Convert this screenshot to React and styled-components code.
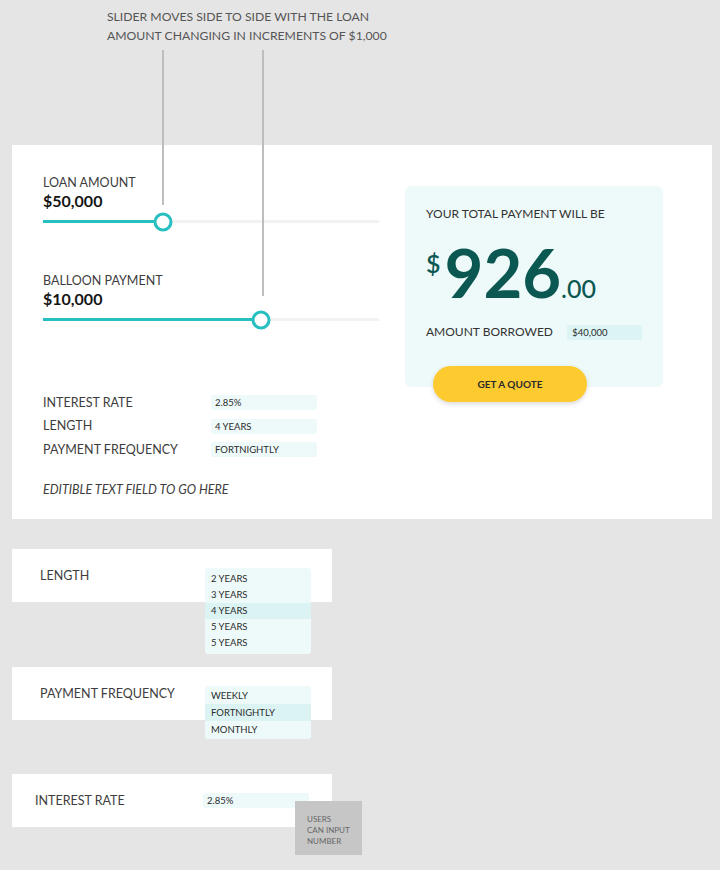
import React from 'react';
import styled, { createGlobalStyle } from 'styled-components';

const GlobalStyle = createGlobalStyle`
  body {
    margin: 0;
    background: #e5e5e5;
    font-family: Lato, "Open Sans", sans-serif;
  }
`;

const teal = '#27bfc0';
const dark = '#0b5752';
const fieldBg = '#eefafa';

const Page = styled.div`
  position: relative;
  width: 720px;
  height: 870px;
  overflow: hidden;
`;

const Annotation = styled.div`
  height: 145px;
  box-sizing: border-box;
  padding: 7px 0 0 107px;
  font-size: 12.2px;
  line-height: 19px;
  color: #555;
`;

const CalloutLine = styled.div`
  position: absolute;
  top: 50px;
  left: ${({ $x }) => $x}px;
  width: 2px;
  height: ${({ $h }) => $h}px;
  background: #bdbdbd;
  z-index: 2;
`;

const MainCard = styled.section`
  margin-left: 12px;
  width: 700px;
  height: 374px;
  box-sizing: border-box;
  background: #fff;
  padding-left: 31px;
  display: grid;
  grid-template-columns: 336px 258px;
  column-gap: 26px;
  align-items: start;
`;

const Controls = styled.div`
  padding-top: 30px;
`;

const Label = styled.div`
  font-size: 12.5px;
  line-height: 16px;
  color: #3d3d3d;
  margin-top: ${({ $mt }) => $mt || 0}px;
`;

const Value = styled.div`
  font-size: 16px;
  line-height: 20px;
  font-weight: 700;
  color: #151515;
`;

const SliderWrap = styled.div`
  position: relative;
  height: 20px;
`;

const Track = styled.div`
  position: absolute;
  left: 0;
  right: 0;
  top: 9px;
  height: 3px;
  background: #f2f2f2;
`;

const Fill = styled.div`
  position: absolute;
  left: 0;
  top: 0;
  bottom: 0;
  background: ${teal};
`;

const Knob = styled.div`
  position: absolute;
  top: 50%;
  width: 19px;
  height: 19px;
  box-sizing: border-box;
  border: 3px solid ${teal};
  border-radius: 50%;
  background: #fff;
  transform: translate(-50%, -50%);
`;

const Slider = ({ pos }) => (
  <SliderWrap>
    <Track>
      <Fill style={{ width: pos }} />
      <Knob style={{ left: pos }} />
    </Track>
  </SliderWrap>
);

const Rows = styled.div`
  margin-top: 62px;
`;

const Row = styled.div`
  display: flex;
  align-items: center;
  height: 23.5px;
`;

const RowLabel = styled(Label)`
  width: ${({ $w }) => $w || 168}px;
  flex-shrink: 0;
`;

const Field = styled.div`
  width: ${({ $w }) => $w || 106}px;
  height: 15px;
  box-sizing: border-box;
  padding-left: ${({ $pl }) => $pl || 4}px;
  background: ${({ $bg }) => $bg || fieldBg};
  border-radius: 2px;
  font-size: 9.5px;
  line-height: 15px;
  color: #2b2b2b;
`;

const Note = styled.div`
  margin-top: 20px;
  font-size: 12.5px;
  line-height: 16px;
  font-style: italic;
  color: #3d3d3d;
`;

const ResultPanel = styled.div`
  position: relative;
  margin-top: 41px;
  height: 201px;
  box-sizing: border-box;
  padding: 20px 21px 0;
  background: ${fieldBg};
  border-radius: 6px;
`;

const PanelTitle = styled.div`
  font-size: 12px;
  line-height: 16px;
  color: #333;
`;

const Amount = styled.div`
  display: flex;
  align-items: baseline;
  margin-top: 17px;
  color: ${dark};
`;

const Dollar = styled.span`
  align-self: flex-start;
  margin-top: 12px;
  margin-right: 4px;
  font-size: 25px;
  line-height: 1;
  font-weight: 600;
`;

const Digits = styled.span`
  font-size: 67px;
  line-height: 66px;
  font-weight: 700;
`;

const Cents = styled.span`
  font-size: 25px;
  font-weight: 500;
`;

const Borrowed = styled.div`
  display: flex;
  align-items: center;
  margin-top: 19px;
`;

const BorrowedLabel = styled.div`
  width: 142px;
  font-size: 12px;
  line-height: 16px;
  color: #333;
`;

const QuoteButton = styled.button`
  position: absolute;
  left: 28px;
  top: 180px;
  width: 154px;
  height: 36px;
  border: 0;
  border-radius: 18px;
  background: #fdca30;
  box-shadow: 0 2px 5px rgba(0, 0, 0, 0.15);
  font-family: inherit;
  font-size: 10px;
  font-weight: 700;
  color: #2a2a2a;
`;

const MiniCard = styled.div`
  position: relative;
  display: flex;
  align-items: flex-start;
  margin: ${({ $mt }) => $mt}px 0 0 12px;
  width: 320px;
  height: 53px;
  box-sizing: border-box;
  padding: ${({ $pt }) => $pt || 19}px 0 0 ${({ $pl }) => $pl || 28}px;
  background: #fff;
`;

const Menu = styled.ul`
  position: absolute;
  left: 193px;
  top: 19px;
  width: 106px;
  margin: 0;
  padding: ${({ $pad }) => $pad}px 0;
  list-style: none;
  background: ${fieldBg};
  border-radius: 3px;
  z-index: 1;
`;

const MenuItem = styled.li`
  height: ${({ $h }) => $h}px;
  line-height: ${({ $h }) => $h}px;
  padding-left: 6px;
  font-size: 9.5px;
  color: #2b2b2b;
  background: ${({ $active }) => ($active ? '#dcf3f3' : 'transparent')};
`;

const Sticky = styled.div`
  position: absolute;
  left: 283px;
  top: 27px;
  width: 67px;
  height: 54px;
  box-sizing: border-box;
  padding: 13px 0 0 12px;
  background: #c6c6c6;
  font-size: 8px;
  line-height: 11px;
  color: #666;
  z-index: 2;
`;

const lengths = ['2 YEARS', '3 YEARS', '4 YEARS', '5 YEARS', '5 YEARS'];
const frequencies = ['WEEKLY', 'FORTNIGHTLY', 'MONTHLY'];

const App = () => (
  <Page>
    <GlobalStyle />
    <Annotation>
      SLIDER MOVES SIDE TO SIDE WITH THE LOAN
      <br />
      AMOUNT CHANGING IN INCREMENTS OF $1,000
    </Annotation>
    <CalloutLine $x={162} $h={155} />
    <CalloutLine $x={262} $h={246} />

    <MainCard>
      <Controls>
        <Label>LOAN AMOUNT</Label>
        <Value>$50,000</Value>
        <Slider pos="120px" />

        <Label $mt={42}>BALLOON PAYMENT</Label>
        <Value>$10,000</Value>
        <Slider pos="218px" />

        <Rows>
          <Row>
            <RowLabel>INTEREST RATE</RowLabel>
            <Field>2.85%</Field>
          </Row>
          <Row>
            <RowLabel>LENGTH</RowLabel>
            <Field>4 YEARS</Field>
          </Row>
          <Row>
            <RowLabel>PAYMENT FREQUENCY</RowLabel>
            <Field>FORTNIGHTLY</Field>
          </Row>
        </Rows>
        <Note>EDITIBLE TEXT FIELD TO GO HERE</Note>
      </Controls>

      <ResultPanel>
        <PanelTitle>YOUR TOTAL PAYMENT WILL BE</PanelTitle>
        <Amount>
          <Dollar>$</Dollar>
          <Digits>926</Digits>
          <Cents>.00</Cents>
        </Amount>
        <Borrowed>
          <BorrowedLabel>AMOUNT BORROWED</BorrowedLabel>
          <Field $w={75} $pl={5} $bg="#dcf4f4">$40,000</Field>
        </Borrowed>
        <QuoteButton>GET A QUOTE</QuoteButton>
      </ResultPanel>
    </MainCard>

    <MiniCard $mt={30}>
      <Label>LENGTH</Label>
      <Menu $pad={3}>
        {lengths.map((l, i) => (
          <MenuItem key={i} $h={16} $active={i === 2}>{l}</MenuItem>
        ))}
      </Menu>
    </MiniCard>

    <MiniCard $mt={65}>
      <Label>PAYMENT FREQUENCY</Label>
      <Menu $pad={1}>
        {frequencies.map((f, i) => (
          <MenuItem key={f} $h={17} $active={i === 1}>{f}</MenuItem>
        ))}
      </Menu>
    </MiniCard>

    <MiniCard $mt={54} $pl={23}>
      <RowLabel>INTEREST RATE</RowLabel>
      <Field>2.85%</Field>
      <Sticky>
        USERS
        <br />
        CAN INPUT
        <br />
        NUMBER
      </Sticky>
    </MiniCard>
  </Page>
);

export default App;
